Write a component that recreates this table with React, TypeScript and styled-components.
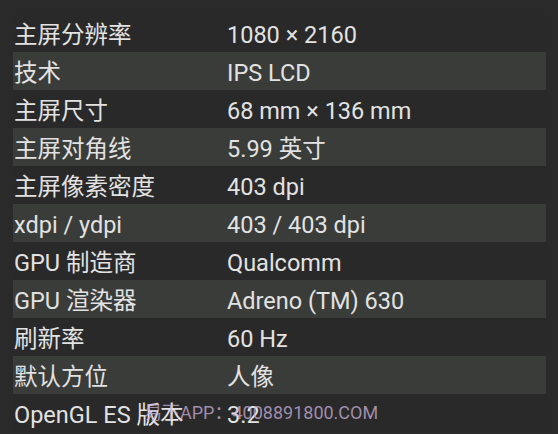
import React from "react";
import styled, { createGlobalStyle } from "styled-components";

const Global = createGlobalStyle`
  html, body { margin: 0; padding: 0; background: #2a2a2a; }
  body { font-family: Roboto, "Noto Sans CJK SC", sans-serif; }
`;

const Page = styled.div`
  position: relative;
  width: 558px;
  height: 434px;
  box-sizing: border-box;
  padding: 14px 12px 0 13px;
  background: #2a2a2a;
  overflow: hidden;
`;

const List = styled.div`
  display: flex;
  flex-direction: column;
`;

const Row = styled.div<{ $striped: boolean }>`
  display: grid;
  grid-template-columns: 214px 1fr;
  align-items: center;
  height: 38px;
  background: ${(p) => (p.$striped ? "#3a3c39" : "#292929")};
  color: #e2e2e2;
  font-size: 23.5px;
  line-height: 38px;
  padding-top: 2px;
  box-sizing: border-box;
`;

const Label = styled.div`
  padding-left: 1px;
  white-space: nowrap;
`;

const Value = styled.div`
  white-space: nowrap;
`;

const Watermark = styled.div`
  position: absolute;
  left: 144px;
  top: 401px;
  font-family: Roboto, "Noto Sans CJK SC", sans-serif;
  font-size: 18px;
  line-height: 24px;
  color: rgba(200, 176, 218, 0.75);
  white-space: nowrap;
  pointer-events: none;
`;

const rows: [string, string][] = [
  ["主屏分辨率", "1080 × 2160"],
  ["技术", "IPS LCD"],
  ["主屏尺寸", "68 mm × 136 mm"],
  ["主屏对角线", "5.99 英寸"],
  ["主屏像素密度", "403 dpi"],
  ["xdpi / ydpi", "403 / 403 dpi"],
  ["GPU 制造商", "Qualcomm"],
  ["GPU 渲染器", "Adreno (TM) 630"],
  ["刷新率", "60 Hz"],
  ["默认方位", "人像"],
  ["OpenGL ES 版本", "3.2"],
];

export default function App() {
  return (
    <>
      <Global />
      <Page>
        <List>
          {rows.map(([k, v], i) => (
            <Row key={k} $striped={i % 2 === 1}>
              <Label>{k}</Label>
              <Value>{v}</Value>
            </Row>
          ))}
        </List>
        <Watermark>易下APP：4008891800.COM</Watermark>
      </Page>
    </>
  );
}
